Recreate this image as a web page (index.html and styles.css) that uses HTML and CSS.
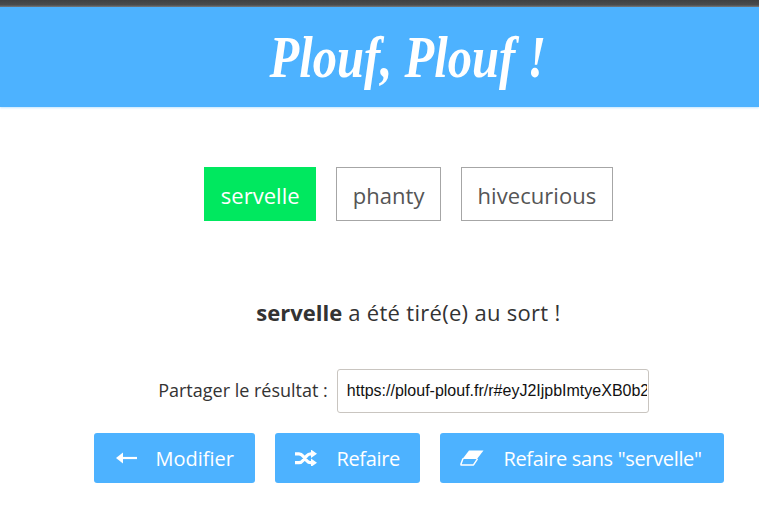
FILE: index.html
```html
<!DOCTYPE html>
<html lang="fr">
<head>
<meta charset="utf-8">
<title>Plouf, Plouf !</title>
<link rel="stylesheet" href="styles.css">
</head>
<body>
<div class="chrome"></div>
<header class="banner"><h1 class="logo">Plouf, Plouf !</h1></header>
<main class="content">
  <ul class="names">
    <li class="name name-picked">servelle</li>
    <li class="name">phanty</li>
    <li class="name">hivecurious</li>
  </ul>
  <p class="result"><strong>servelle</strong> a été tiré(e) au sort !</p>
  <div class="share">
    <label class="share-label" for="link">Partager le résultat :</label>
    <input class="share-input" id="link" type="text" value="https://plouf-plouf.fr/r#eyJ2IjpbImtyeXB0b2ZpbGUiLCJwaGFudHkiXX0">
  </div>
  <div class="actions">
    <a class="btn btn-mod">
      <svg class="icon" width="21" height="14" viewBox="0 0 21 14"><path d="M6 7h15" fill="none" stroke="#fff" stroke-width="2.200"/><path d="M7 1.500v11L0 7z" fill="#fff"/></svg>
      <span>Modifier</span>
    </a>
    <a class="btn btn-redo">
      <svg class="icon" width="22" height="16" viewBox="0 0 22 16"><path d="M0 3.800h4c2 0 3 1 4.200 2.500l3.600 4.400c1.200 1.500 2.200 2 4 2H17M0 12.700h4c2 0 3-1 4.200-2.500l3.600-4.400c1.200-1.500 2.200-2 4-2H17" fill="none" stroke="#fff" stroke-width="3.200"/><path d="M16 -.5l6 4.300-6 4.300zM16 8.400l6 4.300-6 4.300z" fill="#fff"/></svg>
      <span>Refaire</span>
    </a>
    <a class="btn btn-clean">
      <svg class="icon" width="24" height="16" viewBox="0 0 24 16"><path d="M9 .5H23.500L17 9H2.500z" fill="#fff"/><path d="M3 8.500.9 14.200a.5.5 0 0 0 .5.700H13.500l4-6" fill="none" stroke="#fff" stroke-width="1.500" stroke-linejoin="round"/></svg>
      <span>Refaire sans "servelle"</span>
    </a>
  </div>
</main>
</body>
</html>
```
FILE: styles.css
```css
* { box-sizing: border-box; }
html, body { margin: 0; padding: 0; }
body {
  width: 759px;
  height: 524px;
  overflow: hidden;
  background: #fff;
  color: #333;
  font-family: "Open Sans", "Noto Sans", sans-serif;
}
.chrome {
  height: 7px;
  background: linear-gradient(#3f4042 0, #4a4b4d 70%, #77787a 100%);
}
.banner {
  height: 100px;
  padding-left: 57px;
  background: #4db2ff;
  box-shadow: 0 1px 2px rgba(77, 178, 255, .35);
  display: flex;
  align-items: center;
  justify-content: center;
}
.logo {
  margin: 0;
  color: #fff;
  font-family: "Liberation Serif", serif;
  font-style: italic;
  font-weight: 700;
  font-size: 60px;
  line-height: 1;
  transform: scaleX(.81);
}
.content {
  padding-left: 58px;
  display: flex;
  flex-direction: column;
  align-items: center;
}
.names {
  list-style: none;
  margin: 60px 0 0 0;
  padding: 0;
  display: flex;
  gap: 20px;
}
.name {
  height: 54px;
  padding: 1px 15.500px 0;
  border: 1px solid #a6a6a6;
  color: #555;
  font-size: 22px;
  letter-spacing: .05px;
  display: flex;
  align-items: center;
}
.name-picked {
  background: #00e85f;
  border-color: #00e85f;
  color: #fff;
}
.result {
  margin: 76px 0 0 0;
  font-size: 22px;
  line-height: 30px;
  letter-spacing: .3px;
}
.result strong { letter-spacing: 0; }
.share {
  margin: 42px 10px 0 0;
  display: flex;
  align-items: center;
  gap: 9px;
}
.share-label {
  font-size: 18px;
  padding-bottom: 2px;
}
.share-input {
  width: 312px;
  height: 44px;
  padding: 0 1px 0 9px;
  border: 1px solid #c9c5c0;
  border-radius: 3px;
  color: #111;
  font-family: "Liberation Sans", sans-serif;
  font-size: 16px;
}
.actions {
  margin-top: 20px;
  display: flex;
  gap: 20px;
}
.btn {
  height: 50px;
  background: #4db2ff;
  border-radius: 3px;
  color: #fff;
  font-size: 20px;
  display: flex;
  align-items: center;
  padding: 0 20px;
}
.btn-mod { gap: 19px; width: 161px; padding-left: 22px; }
.btn-redo { gap: 20px; width: 145px; letter-spacing: -.35px; }
.btn-clean { gap: 20px; width: 284px; letter-spacing: -.35px; }
.icon { flex: none; }
```
